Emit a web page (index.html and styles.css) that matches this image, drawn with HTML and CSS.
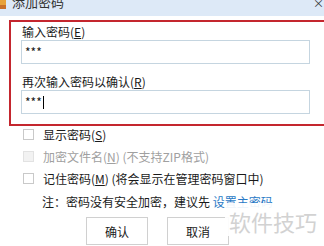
FILE: index.html
```html
<!DOCTYPE html>
<html lang="zh-CN">
<head>
  <meta charset="UTF-8">
  <title>添加密码</title>
  <link rel="stylesheet" href="styles.css">
</head>
<body>
  <div class="window">
    <div class="titlebar">
      <svg class="app-icon" width="6" height="9" viewBox="0 0 6 9">
        <rect x="0" y="0" width="6" height="9" fill="#e8a23a"/>
        <rect x="0" y="5" width="6" height="4" fill="#c9702a"/>
      </svg>
      <span class="title">添加密码</span>
      <span class="close">×</span>
    </div>

    <div class="pwd-box">
      <div class="field-label">输入密码(<u>E</u>)</div>
      <div class="field">***</div>
      <div class="field-label second">再次输入密码以确认(<u>R</u>)</div>
      <div class="field">***<span class="caret"></span></div>
    </div>

    <div class="options">
      <label class="option">
        <span class="box"></span><span>显示密码(<u>S</u>)</span>
      </label>
      <label class="option disabled">
        <span class="box"></span><span>加密文件名(<u>N</u>) (不支持ZIP格式)</span>
      </label>
      <label class="option">
        <span class="box"></span><span>记住密码(<u>M</u>) (将会显示在管理密码窗口中)</span>
      </label>
    </div>

    <p class="note">注：密码没有安全加密，建议先 <a href="#">设置主密码</a></p>

    <div class="buttons">
      <button class="btn">确认</button>
      <button class="btn">取消</button>
    </div>

    <div class="watermark">软件技巧</div>
  </div>
</body>
</html>
```

FILE: styles.css
```css
body {
  margin: 0;
  background: #fff;
  font-family: "Noto Sans CJK SC", "Microsoft YaHei", sans-serif;
  font-size: 12px;
  color: #1a1a1a;
  overflow: hidden;
}
.window {
  position: relative;
  width: 324px;
  height: 246px;
  overflow: hidden;
}
.titlebar {
  display: flex;
  align-items: flex-start;
  height: 16px;
  background: #dde9f7;
  overflow: hidden;
}
.app-icon {
  flex: none;
}
.title {
  margin-left: 6px;
  margin-top: -6px;
  font-size: 13px;
  line-height: 16px;
  color: #333;
}
.close {
  margin-left: auto;
  margin-top: -3px;
  font-size: 11px;
  line-height: 12px;
  color: #333;
}
/* red highlight around the two fields */
.pwd-box {
  margin: 4px -10px 0 9px;
  border: 2px solid #c4262e;
  padding: 3px 0 10px 10px;
}
.field-label {
  line-height: 14px;
  margin-left: 1px;
}
.field-label.second {
  margin-top: 11px;
}
.field {
  width: 284px;
  height: 22px;
  margin-top: 1px;
  border: 1px solid #c5d5e0;
  padding-left: 3px;
  line-height: 20px;
  display: flex;
  align-items: center;
}
.caret {
  width: 1px;
  height: 13px;
  background: #000;
  margin-left: 1px;
}
.options {
  display: flex;
  flex-direction: column;
  gap: 9px;
  padding: 2px 0 0 23px;
}
.option {
  display: flex;
  align-items: center;
  gap: 9px;
  line-height: 13px;
}
.box {
  width: 9px;
  height: 9px;
  border: 1px solid #c9c9c9;
  background: #fff;
}
.option.disabled {
  color: #a0a0a0;
}
.option.disabled .box {
  background: #f2f2f2;
  border-color: #e2e2e2;
}
.note {
  margin: 10px 0 0 42px;
  line-height: 14px;
}
.note a {
  color: #2a7ac6;
  text-decoration: none;
}
.buttons {
  display: flex;
  gap: 19px;
  margin: 8px 0 0 86px;
}
.btn {
  width: 62px;
  height: 28px;
  border: 1px solid #d0d0d0;
  background: #fff;
  font-family: inherit;
  font-size: 12px;
  color: #1a1a1a;
  padding: 0;
}
/* watermark sits over the link's lower half */
.watermark {
  position: absolute;
  left: 225px;
  top: 203px;
  padding: 3px 4px 0;
  background: rgba(255, 255, 255, 0.92);
  font-size: 22px;
  line-height: 30px;
  color: #d2d2d2;
}
```
